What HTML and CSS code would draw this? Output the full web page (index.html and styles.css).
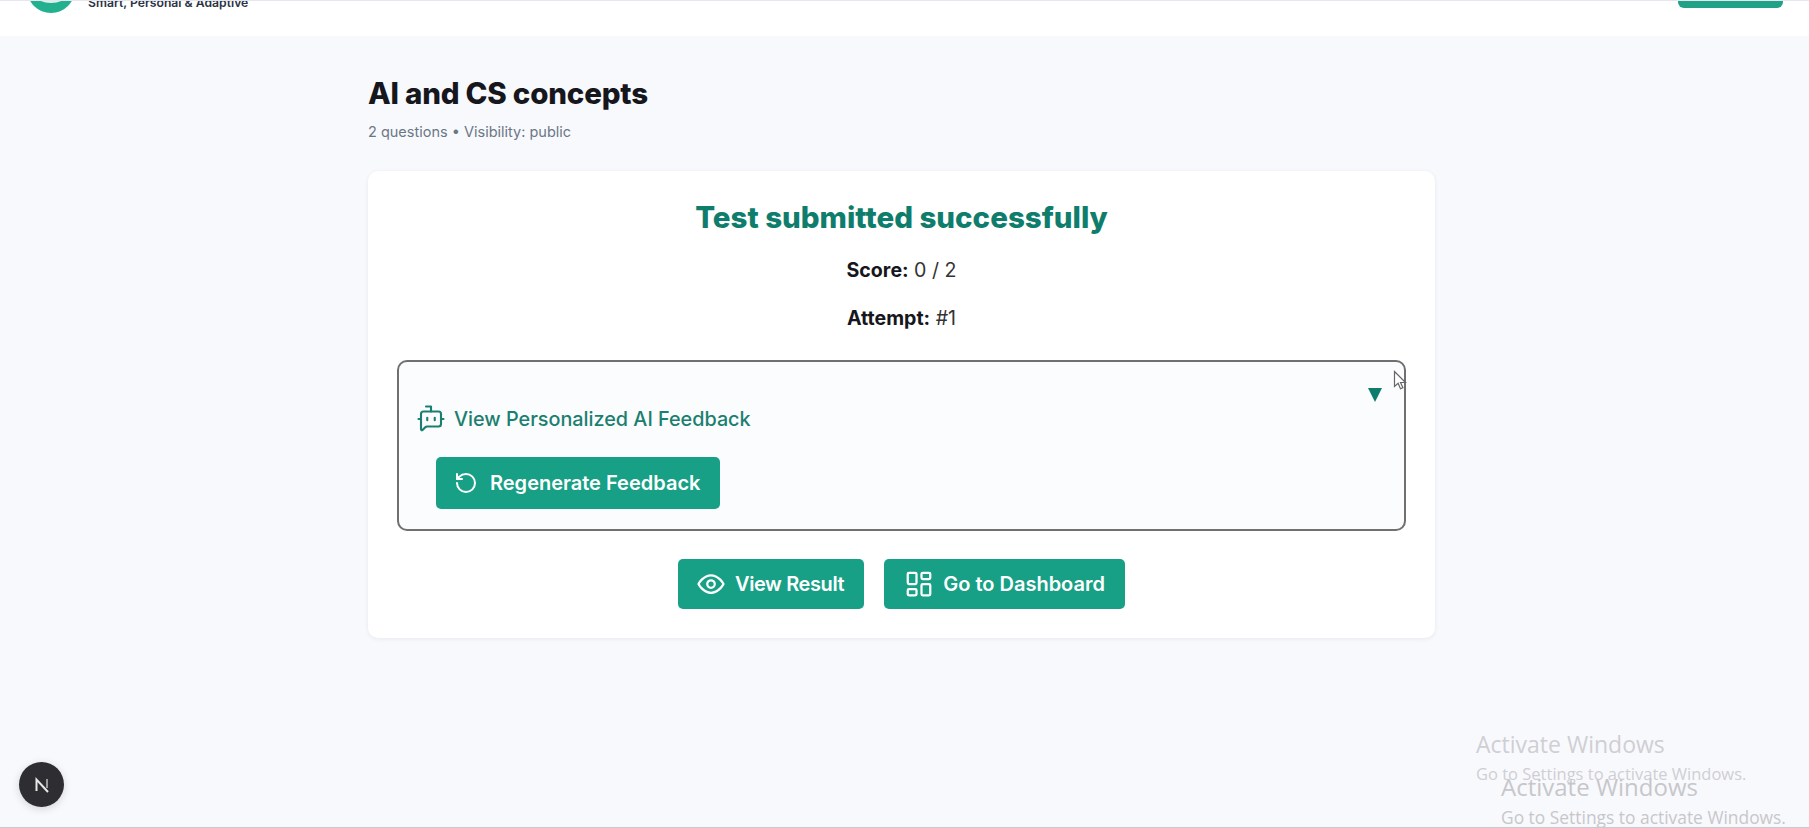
FILE: index.html
```html
<!DOCTYPE html>
<html>
<head>
  <title>AI and CS concepts</title>
  <link rel="stylesheet" href="styles.css">
</head>
<body>
<header class="topbar">
  <div class="brand">
    <svg class="brand-logo" width="48" height="48" viewBox="0 0 48 48">
      <circle cx="24" cy="24" r="24" fill="#22b08f"/>
      <ellipse cx="24" cy="28" rx="16" ry="9" fill="none" stroke="#d8f3ea" stroke-width="2"/>
    </svg>
    <span class="brand-tag">Smart, Personal &amp; Adaptive</span>
  </div>
  <div class="topbar-btn"></div>
</header>

<main class="page">
  <h1 class="test-title">AI and CS concepts</h1>
  <p class="test-meta">2 questions • Visibility: public</p>

  <section class="card">
    <h2 class="success">Test submitted successfully</h2>
    <p class="stat"><b>Score:</b> 0 / 2</p>
    <p class="stat"><b>Attempt:</b> #1</p>

    <div class="feedback">
      <span class="caret"></span>
      <div class="feedback-title">
        <svg width="30" height="30" viewBox="0 0 24 24" fill="none" stroke="currentColor" stroke-width="1.7" stroke-linecap="round" stroke-linejoin="round">
          <path d="M12 6V2H8"/>
          <path d="M15 11v2"/>
          <path d="M2 12h2"/>
          <path d="M20 12h2"/>
          <path d="M20 16a2 2 0 0 1-2 2H8.828a2 2 0 0 0-1.414.586l-2.202 2.202A.71.71 0 0 1 4 20.286V8a2 2 0 0 1 2-2h12a2 2 0 0 1 2 2z"/>
          <path d="M9 11v2"/>
        </svg>
        <span>View Personalized AI Feedback</span>
      </div>
      <button class="btn btn-regen">
        <svg width="24" height="24" viewBox="0 0 24 24" fill="none" stroke="currentColor" stroke-width="2" stroke-linecap="round" stroke-linejoin="round">
          <path d="M3 12a9 9 0 1 0 9-9 9.75 9.75 0 0 0-6.74 2.74L3 8"/>
          <path d="M3 3v5h5"/>
        </svg>
        Regenerate Feedback
      </button>
    </div>

    <div class="actions">
      <button class="btn btn-result">
        <svg width="30" height="30" viewBox="0 0 24 24" fill="none" stroke="currentColor" stroke-width="1.8" stroke-linecap="round" stroke-linejoin="round">
          <path d="M2 12s3.6-7 10-7 10 7 10 7-3.6 7-10 7-10-7-10-7z"/>
          <circle cx="12" cy="12" r="3"/>
        </svg>
        View Result
      </button>
      <button class="btn btn-dash">
        <svg width="30" height="30" viewBox="0 0 24 24" fill="none" stroke="currentColor" stroke-width="1.8" stroke-linecap="round" stroke-linejoin="round">
          <rect x="3" y="3" width="7" height="9" rx="1"/>
          <rect x="14" y="3" width="7" height="5" rx="1"/>
          <rect x="14" y="12" width="7" height="9" rx="1"/>
          <rect x="3" y="16" width="7" height="5" rx="1"/>
        </svg>
        Go to Dashboard
      </button>
    </div>
  </section>
</main>

<div class="next-badge">
  <svg width="20" height="20" viewBox="0 0 20 20" fill="none" stroke="#e8e8e8" stroke-width="2">
    <path d="M4.5 16V4.5L16 17"/>
    <path d="M15 4v9" stroke="#9a9a9a"/>
  </svg>
</div>

<svg class="cursor" width="16" height="22" viewBox="0 0 16 22">
  <path d="M1.5 1.5v15l3.6-3.2 2.4 5.5 2.4-1-2.4-5.3h5z" fill="#fff" stroke="#666" stroke-width="1.2"/>
</svg>

<div class="watermark wm-back">
  <div class="wm-big">Activate Windows</div>
  <div class="wm-small">Go to Settings to activate Windows.</div>
</div>
<div class="watermark wm-front">
  <div class="wm-big">Activate Windows</div>
  <div class="wm-small">Go to Settings to activate Windows.</div>
</div>
</body>
</html>
```

FILE: styles.css
```css
* {
  box-sizing: border-box;
}
body {
  margin: 0;
  height: 828px;
  overflow: hidden;
  background-color: #f8f9fd;
  font-family: Inter, "Open Sans", sans-serif;
  color: #16161d;
  border-bottom: 1px solid #c9c9cc;
  position: relative;
}

.topbar {
  height: 36px;
  background-color: #fff;
  border-top: 1px solid #e6e6ee;
  display: flex;
  justify-content: space-between;
  align-items: flex-end;
  overflow: hidden;
  padding: 0 26px 0 27px;
}
.brand {
  display: flex;
  align-items: flex-end;
  gap: 13px;
  margin-bottom: 23px;
}
.brand-logo {
  flex: none;
}
.brand-tag {
  font-size: 12.2px;
  font-weight: 600;
  color: #2b3345;
  line-height: 16px;
  margin-bottom: 2px;
}
.topbar-btn {
  width: 105px;
  height: 40px;
  margin-bottom: 28px;
  background-color: #1fa286;
  border-radius: 6px;
}

.page {
  width: 1067px;
  margin-left: 368px;
}
.test-title {
  margin: 38px 0 0;
  font-size: 29.5px;
  line-height: 38px;
  font-weight: 800;
  letter-spacing: -0.2px;
}
.test-meta {
  margin: 9px 0 0;
  font-size: 14.5px;
  line-height: 22px;
  color: #6b7785;
}

.card {
  margin-top: 28px;
  height: 467px;
  padding: 27px 29px 0;
  background-color: #fff;
  border-radius: 10px;
  box-shadow: 0 1px 4px rgba(30, 40, 70, 0.08);
  display: flex;
  flex-direction: column;
  align-items: center;
}
.success {
  margin: 0;
  font-size: 29.5px;
  line-height: 38px;
  font-weight: 800;
  color: #0f7d6c;
}
.stat {
  margin: 21px 0 0;
  font-size: 19.6px;
  line-height: 27px;
  color: #333;
}
.stat b {
  color: #16161d;
  font-weight: 700;
}

.feedback {
  position: relative;
  align-self: stretch;
  margin-top: 28px;
  height: 171px;
  padding: 42px 0 0 17px;
  background-color: #fbfcfd;
  border: 2px solid #707070;
  border-radius: 10px;
}
.caret {
  position: absolute;
  top: 26px;
  right: 22px;
  border-left: 7px solid transparent;
  border-right: 7px solid transparent;
  border-top: 14px solid #0f7d6c;
}
.feedback-title {
  display: flex;
  align-items: center;
  gap: 8px;
  font-size: 19.8px;
  font-weight: 500;
  color: #1a7f70;
}
.btn {
  display: inline-flex;
  align-items: center;
  gap: 9px;
  height: 50px;
  padding: 0 20px 0 18px;
  border: none;
  border-radius: 5px;
  background-color: #17a085;
  color: #fff;
  font-family: inherit;
  font-size: 20px;
  font-weight: 600;
  white-space: nowrap;
}
.btn-regen {
  height: 52px;
  margin: 23px 0 0 20px;
  gap: 12px;
}
.btn-result {
  letter-spacing: -0.4px;
}
.btn-dash {
  padding-left: 20px;
}
.actions {
  display: flex;
  gap: 20px;
  margin-top: 28px;
}

.next-badge {
  position: absolute;
  left: 19px;
  top: 762px;
  width: 45px;
  height: 45px;
  display: flex;
  align-items: center;
  justify-content: center;
  border-radius: 50%;
  background-color: #2e2e32;
  box-shadow: 0 2px 8px rgba(0, 0, 0, 0.15);
}
.cursor {
  position: absolute;
  left: 1393px;
  top: 370px;
}

.watermark {
  position: absolute;
  font-family: "Open Sans", sans-serif;
  white-space: nowrap;
}
.wm-back {
  left: 1476px;
  top: 728px;
  color: #cfcfd3;
}
.wm-front {
  left: 1501px;
  top: 771px;
  color: #c7c7ca;
}
.wm-big {
  font-size: 23px;
  line-height: 32px;
}
.wm-small {
  font-size: 16.5px;
  line-height: 24px;
  margin-top: 2px;
}
.wm-front .wm-big {
  font-size: 24px;
}
.wm-front .wm-small {
  font-size: 17.4px;
  line-height: 20px;
  margin-top: 4px;
}
```
